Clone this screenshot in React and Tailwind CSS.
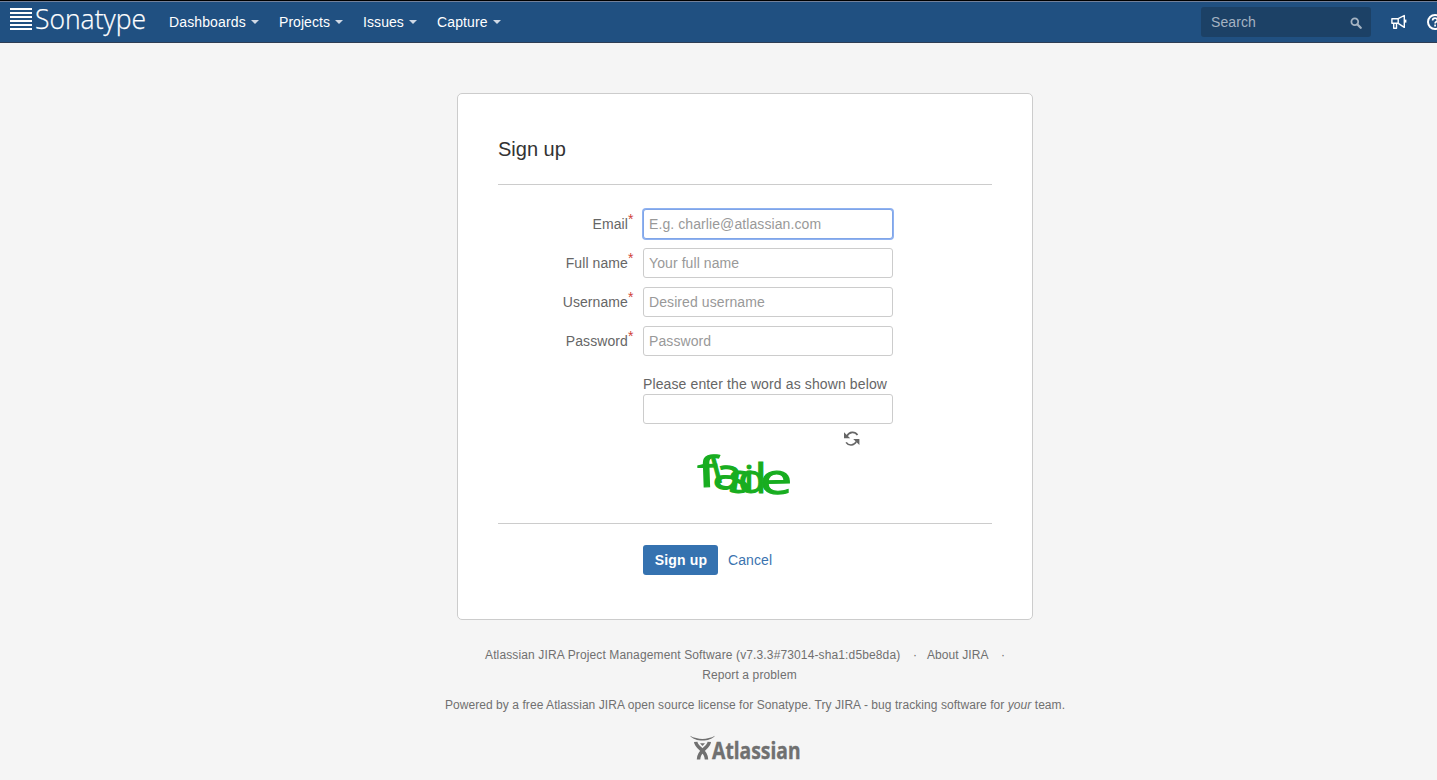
import React from "react";

const menus = [
  { label: "Dashboards", width: "w-[90px]", tracking: "tracking-[0.13px]" },
  { label: "Projects", width: "w-[64px]", tracking: "tracking-[0.05px]" },
  { label: "Issues", width: "w-[54px]", tracking: "tracking-[0.08px]" },
  { label: "Capture", width: "w-[64px]", tracking: "tracking-[0.12px]" },
];

const fields = [
  { label: "Email", placeholder: "E.g. charlie@atlassian.com", focused: true },
  { label: "Full name", placeholder: "Your full name" },
  { label: "Username", placeholder: "Desired username" },
  { label: "Password", placeholder: "Password" },
];

function SonatypeLogo() {
  return (
    <svg width="138" height="38" viewBox="0 0 138 38" className="block shrink-0 overflow-visible" aria-label="Sonatype">
      {[0, 4, 8, 12, 16, 20].map((y) => (
        <rect key={y} x="0" y={y + 2} width="22" height="2" fill="#fff" />
      ))}
      <text x="25" y="23" fontSize="28" fontWeight="300" textLength="111" lengthAdjust="spacingAndGlyphs" fill="#fff" stroke="#fff" strokeWidth="0.25" className="font-['Open_Sans','Noto_Sans',sans-serif]">
        Sonatype
      </text>
    </svg>
  );
}

function Header() {
  return (
    <header className="flex h-[43px] items-start border-t border-b border-t-black border-b-[#2e3d54] bg-[#205081] pl-[10px] shadow-[inset_0_1px_0_#73819b]">
      <div className="h-[41px] pt-[5px]">
        <SonatypeLogo />
      </div>
      <nav className="ml-[21px] flex h-[41px] items-center gap-5 pt-[2px] text-[14px] text-white">
        {menus.map((m) => (
          <a key={m.label} className={"flex items-center justify-between whitespace-nowrap " + m.width + " " + m.tracking}>
            {m.label}
            <svg width="8" height="4" viewBox="0 0 8 4" className="mb-[2px] shrink-0">
              <path d="M0 0h8L4 4z" fill="#d0d9e6" />
            </svg>
          </a>
        ))}
      </nav>
      <div className="mt-[6px] ml-auto flex h-[30px] w-[170px] shrink-0 items-center justify-between rounded-[3px] bg-[#1c4166] pr-[9px] pl-[10px] text-[14px] tracking-[0.1px] text-[#a5b3c2]">
        Search
        <svg width="12" height="12" viewBox="0 0 12 12" fill="none" stroke="#a5b3c2" className="mt-px">
          <circle cx="4.8" cy="4.8" r="3.4" strokeWidth="1.8" />
          <path d="M7.5 7.5l3.2 3.2" strokeWidth="2.3" strokeLinecap="round" />
        </svg>
      </div>
      <svg width="16" height="16" viewBox="0 0 16 16" className="mt-[13px] ml-[20px] shrink-0" fill="none" stroke="#fff" strokeWidth="1.4" strokeLinejoin="round">
        <path d="M.9 4.7h6.3v4.6H.9z" />
        <path d="M7.2 4.7L13.3 1.5v11.9L7.2 9.3M2.7 9.3v4.9h2.8V9.3" />
        <path d="M14.6 5.6v3" strokeWidth="1.6" />
      </svg>
      <div className="ml-[20px] w-[10px] shrink-0 overflow-hidden pt-[13px]">
        <svg width="16" height="16" viewBox="0 0 16 16" fill="none" stroke="#fff">
          <circle cx="8" cy="8" r="7" strokeWidth="2" />
          <path d="M5.6 6.5c0-3.3 4.8-3 4.8-.3 0 1.7-2.3 1.5-2.3 3.3M8.1 10.6v1.8" strokeWidth="1.7" />
        </svg>
      </div>
    </header>
  );
}

function Field({ label, placeholder, focused }) {
  return (
    <div className="flex h-[30px]">
      <label className="flex w-[135px] justify-end text-[14px] leading-[31px] tracking-[0.09px] text-[#666]">
        {label}
        <span className="h-[20px] w-[5px] leading-[21px] text-[#d04437]">*</span>
      </label>
      <input
        placeholder={placeholder}
        className={
          "ml-[10px] h-[30px] w-[250px] rounded-[3px] border bg-white pl-[5px] text-[14px] tracking-[0.09px] outline-none placeholder:text-[#999] " +
          (focused ? "border-[#80a5e8] shadow-[0_0_0_1px_#8fb2f1]" : "border-[#ccc]")
        }
      />
    </div>
  );
}

function Captcha() {
  return (
    <svg width="100" height="48" viewBox="0 0 100 48" className="block overflow-visible" fill="#18ad20" stroke="#18ad20" strokeWidth="1" fontSize="36" aria-label="flaside">
      <g className="font-['Open_Sans','Noto_Sans',sans-serif]">
        <text transform="translate(5 36) rotate(-2) scale(1.65 1.15)">f</text>
        <text transform="translate(22 33) rotate(-15) scale(1.1 1)">l</text>
        <text transform="translate(19 36) rotate(9) scale(1.4 1.2)">a</text>
        <text transform="translate(35 41) rotate(3) scale(1.25 1.1)">s</text>
        <text transform="translate(51 40) scale(1.1 1)">i</text>
        <text transform="translate(45 42) scale(1.3 1.12)">d</text>
        <text transform="translate(67 43) rotate(-1) scale(1.6 1.15)">e</text>
      </g>
    </svg>
  );
}

function RefreshIcon() {
  return (
    <svg width="16" height="16" viewBox="0 0 16 16" fill="none" stroke="#666" strokeWidth="1.7">
      <path d="M3 5C5.2.3 11 .2 13.5 4M12.3 10.5c-2.2 4.5-7.8 4.5-10.2.9" />
      <path d="M0 1.2L0 7.2H6.2zM15.4 14V8H9.2z" fill="#666" stroke="none" />
    </svg>
  );
}

function AtlassianLogo() {
  return (
    <svg width="112" height="27" viewBox="0 0 112 27" fill="#707070" className="overflow-visible" aria-label="Atlassian">
      <path d="M0 .8C8 5 17 5 25 .8 20 7.2 5 7.2 0 .8z" />
      <path d="M5.7 6.8C6.3 13.5 16.5 14.5 16.5 24.5M19.3 6.8C18.7 13.5 8.5 14.5 8.5 24.5" fill="none" stroke="#707070" strokeWidth="3.5" />
      <path d="M10 8.2h5L12.5 11z" />
      <text x="22" y="24" fontSize="22.5" fontWeight="700" textLength="88.5" lengthAdjust="spacingAndGlyphs" stroke="#707070" strokeWidth="0.35" className="font-['Noto_Sans','Open_Sans',sans-serif]">
        Atlassian
      </text>
    </svg>
  );
}

export default function App() {
  return (
    <div className="h-[780px] w-full overflow-hidden bg-[#f5f5f5] font-['Liberation_Sans',Arial,sans-serif] text-[#333]">
      <Header />
      <main className="mt-[50px] ml-[457px] h-[527px] w-[576px] rounded-[5px] border border-[#ccc] bg-white px-[40px]">
        <h1 className="mt-[40px] h-[51px] border-b border-[#ccc] text-[20px] leading-[30px]">Sign up</h1>
        <form className="pt-[24px]">
          <div className="flex flex-col gap-[9px]">
            {fields.map((f) => (
              <Field key={f.label} {...f} />
            ))}
          </div>
          <div className="mt-[18px] ml-[145px] flex w-[250px] flex-col text-[14px] text-[#666]">
            <label className="leading-[20px] tracking-[0.12px] whitespace-nowrap">Please enter the word as shown below</label>
            <input className="h-[30px] rounded-[3px] border border-[#ccc] bg-white outline-none" />
            <div className="mt-[7px] flex h-[16px] justify-end pr-[33px]">
              <RefreshIcon />
            </div>
            <div className="mt-[4px] ml-[50px] h-[48px]">
              <Captcha />
            </div>
          </div>
          <div className="mt-[24px] flex items-center border-t border-[#ccc] pt-[21px] pl-[145px] text-[14px]">
            <button className="h-[30px] w-[75px] rounded-[3px] bg-[#3572b0] pl-px font-bold tracking-[0.15px] text-white">Sign up</button>
            <a className="ml-[10px] tracking-[0.1px] text-[#3b73af]">Cancel</a>
          </div>
        </form>
      </main>
      <footer className="ml-[435px] flex w-[640px] flex-col items-center pt-[25px] text-[12px] leading-[20px] text-[#707070]">
        <div className="flex w-[540px] whitespace-nowrap">
          <span className="w-[428px] tracking-[0.13px]">Atlassian JIRA Project Management Software (v7.3.3#73014-sha1:d5be8da)</span>
          <span className="w-[14px]">·</span>
          <span className="w-[74px] tracking-[0.08px]">About JIRA</span>
          <span>·</span>
        </div>
        <div className="mr-[11px] tracking-[0.12px]">Report a problem</div>
        <div className="mt-[10px] tracking-[0.063px] whitespace-nowrap">
          Powered by a free Atlassian JIRA open source license for Sonatype. Try JIRA - bug tracking software for <em>your</em> team.
        </div>
        <div className="mt-[20px] mr-[19px]">
          <AtlassianLogo />
        </div>
      </footer>
    </div>
  );
}
